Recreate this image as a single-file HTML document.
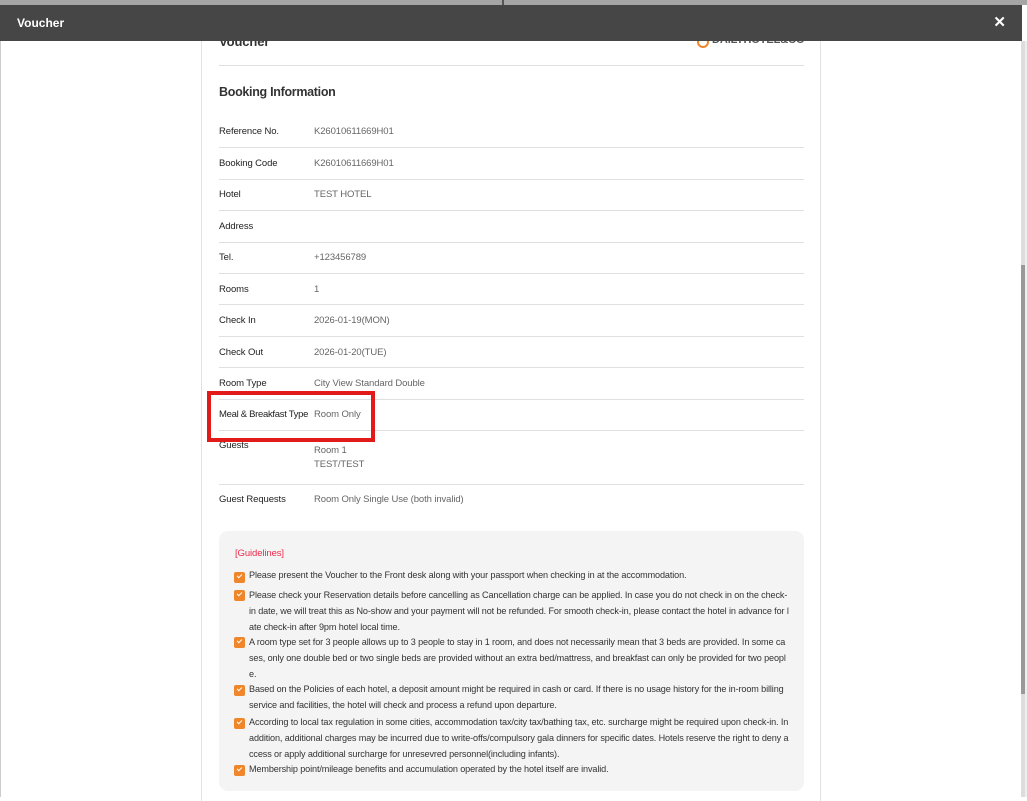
<!DOCTYPE html>
<html><head><meta charset="utf-8"><style>
*{margin:0;padding:0;box-sizing:border-box}
body{width:1027px;height:797px;overflow:hidden;background:#fff;font-family:"Liberation Sans",sans-serif;position:relative}
.topbar{position:absolute;left:0;top:0;width:1027px;height:5px;background:#a5a5a5}
.hdr{position:absolute;left:0;top:5px;width:1022px;height:36px;background:#464646;color:#fff;font-weight:bold;font-size:12px;padding:11px 0 0 17px}
.x{position:absolute;right:16px;top:8px;color:#fff;font-size:15px;font-weight:bold}
.lb{position:absolute;left:0;top:41px;width:1px;height:756px;background:#ccc}
.track{position:absolute;left:1021px;top:41px;width:4px;height:756px;background:#ddd}
.thumb{position:absolute;left:1021px;top:265px;width:4px;height:429px;background:#999}
.rside{position:absolute;left:1025px;top:41px;width:2px;height:756px;background:#eee}
.card{position:absolute;left:201px;top:41px;width:620px;height:760px;border-left:1px solid #e2e2e2;border-right:1px solid #e2e2e2}
.t{position:absolute;font-size:9.5px;color:#222;white-space:nowrap;letter-spacing:-0.1px}
.v{color:#666}
.ln{position:absolute;left:219px;width:585px;height:1px;background:#e0e0e0}
.gbox{position:absolute;left:219px;top:531px;width:585px;height:260px;background:#f4f4f4;border-radius:9px}
.g{position:absolute;left:249px;width:540px;font-size:9.1px;line-height:16px;color:#333;letter-spacing:-0.12px;word-break:break-all}
.cb{position:absolute;left:234px;width:11px;height:11px;background:#f0862a;border-radius:2px}
.cb:after{content:"";position:absolute;left:3px;top:2px;width:4px;height:2px;border-left:1.3px solid #fff;border-bottom:1.3px solid #fff;transform:rotate(-45deg)}
.red{position:absolute;left:207px;top:391px;width:168px;height:51px;border:4px solid #e21a1a}
</style></head><body>
<div class="topbar"></div>
<div style="position:absolute;left:502px;top:0;width:2px;height:5px;background:#555"></div>
<div class="card"></div>
<div class="t" style="left:219px;top:34px;font-size:13px;font-weight:bold;color:#333">Voucher</div>
<div style="position:absolute;left:697px;top:36px;width:12px;height:12px;border:2.5px solid #f0862a;border-radius:50%"></div>
<div class="t" style="left:712px;top:34px;font-size:11px;font-weight:bold;color:#555">DAILYHOTEL&amp;CO</div>
<div class="hdr">Voucher<span class="x">✕</span></div>
<div class="lb"></div>
<div class="track"></div><div class="thumb"></div><div class="rside"></div>
<div class="ln" style="top:65px"></div>
<div class="t" style="left:219px;top:85px;font-size:12.5px;font-weight:bold;color:#333;letter-spacing:-0.3px">Booking Information</div>

<div class="t" style="left:219px;top:126px">Reference No.</div><div class="t v" style="left:314px;top:126px">K26010611669H01</div>
<div class="ln" style="top:147px"></div>
<div class="t" style="left:219px;top:158px">Booking Code</div><div class="t v" style="left:314px;top:158px">K26010611669H01</div>
<div class="ln" style="top:179px"></div>
<div class="t" style="left:219px;top:189px">Hotel</div><div class="t v" style="left:314px;top:189px">TEST HOTEL</div>
<div class="ln" style="top:210px"></div>
<div class="t" style="left:219px;top:221px">Address</div>
<div class="ln" style="top:242px"></div>
<div class="t" style="left:219px;top:252px">Tel.</div><div class="t v" style="left:314px;top:252px">+123456789</div>
<div class="ln" style="top:273px"></div>
<div class="t" style="left:219px;top:284px">Rooms</div><div class="t v" style="left:314px;top:284px">1</div>
<div class="ln" style="top:304px"></div>
<div class="t" style="left:219px;top:315px">Check In</div><div class="t v" style="left:314px;top:315px">2026-01-19(MON)</div>
<div class="ln" style="top:336px"></div>
<div class="t" style="left:219px;top:347px">Check Out</div><div class="t v" style="left:314px;top:347px">2026-01-20(TUE)</div>
<div class="ln" style="top:367px"></div>
<div class="t" style="left:219px;top:378px">Room Type</div><div class="t v" style="left:314px;top:378px">City View Standard Double</div>
<div class="ln" style="top:399px"></div>
<div class="t" style="left:219px;top:409px;letter-spacing:-0.3px">Meal &amp; Breakfast Type</div><div class="t v" style="left:314px;top:409px">Room Only</div>
<div class="ln" style="top:430px"></div>
<div class="t" style="left:219px;top:440px">Guests</div><div class="t v" style="left:314px;top:444px;line-height:14px">Room 1<br>TEST/TEST</div>
<div class="ln" style="top:484px"></div>
<div class="t" style="left:219px;top:494px">Guest Requests</div><div class="t v" style="left:314px;top:494px">Room Only Single Use (both invalid)</div>
<div class="red"></div>

<div class="gbox"></div>
<div class="t" style="left:235px;top:548px;color:#ee2a4a;font-size:9.5px">[Guidelines]</div>
<div class="cb" style="top:572px"></div><div class="g" style="top:567px">Please present the Voucher to the Front desk along with your passport when checking in at the accommodation.</div>
<div class="cb" style="top:590px"></div><div class="g" style="top:587px">Please check your Reservation details before cancelling as Cancellation charge can be applied. In case you do not check in on the check-in date, we will treat this as No-show and your payment will not be refunded. For smooth check-in, please contact the hotel in advance for late check-in after 9pm hotel local time.</div>
<div class="cb" style="top:637px"></div><div class="g" style="top:634px">A room type set for 3 people allows up to 3 people to stay in 1 room, and does not necessarily mean that 3 beds are provided. In some cases, only one double bed or two single beds are provided without an extra bed/mattress, and breakfast can only be provided for two people.</div>
<div class="cb" style="top:685px"></div><div class="g" style="top:681px">Based on the Policies of each hotel, a deposit amount might be required in cash or card. If there is no usage history for the in-room billing service and facilities, the hotel will check and process a refund upon departure.</div>
<div class="cb" style="top:718px"></div><div class="g" style="top:714px">According to local tax regulation in some cities, accommodation tax/city tax/bathing tax, etc. surcharge might be required upon check-in. In addition, additional charges may be incurred due to write-offs/compulsory gala dinners for specific dates. Hotels reserve the right to deny access or apply additional surcharge for unresevred personnel(including infants).</div>
<div class="cb" style="top:765px"></div><div class="g" style="top:761px">Membership point/mileage benefits and accumulation operated by the hotel itself are invalid.</div>
</body></html>
